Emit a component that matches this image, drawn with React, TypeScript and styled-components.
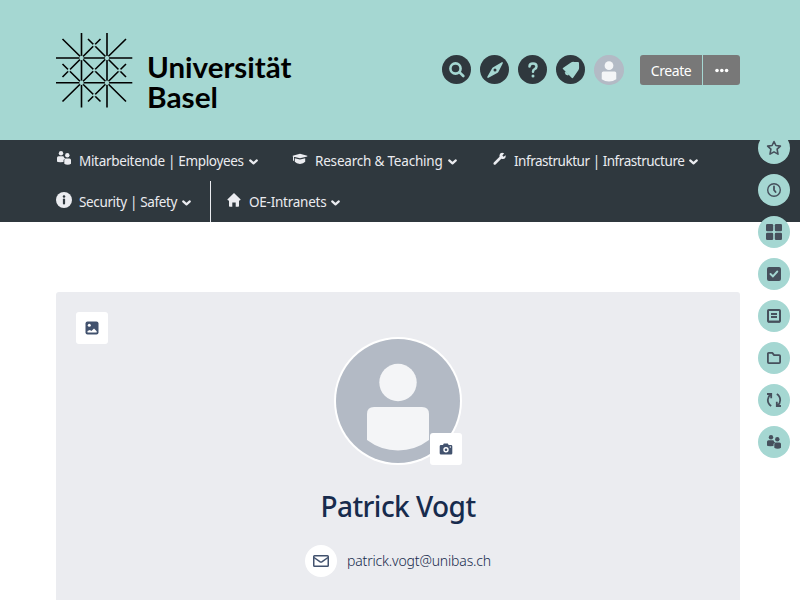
import React from 'react';
import styled, { createGlobalStyle } from 'styled-components';

const teal = '#a5d7d2';
const dark = '#2f383e';
const slate = '#46505c';

const GlobalStyle = createGlobalStyle`
  * { box-sizing: border-box; }
  html, body { margin: 0; background: #fff; overflow: hidden; }
  body { font-family: "Noto Sans", "Open Sans", sans-serif; font-size: 14px; color: #172b4d; }
  svg { display: block; flex: none; overflow: visible; }
`;

const Page = styled.div`
  position: relative;
  width: 800px;
  height: 600px;
  overflow: hidden;
`;
const Header = styled.header`
  height: 140px;
  padding: 0 60px 0 56px;
  background: ${teal};
  display: flex;
  justify-content: space-between;
`;
const Brand = styled.div`
  display: flex;
  margin-top: 30px;
`;
const Wordmark = styled.svg`
  margin: 18px 0 0 10px;
`;
const Actions = styled.div`
  display: flex;
  height: 30px;
  margin-top: 55px;
  align-items: flex-start;
`;
const Round = styled.button`
  width: 29px;
  height: 29px;
  margin: 0 9px 0 0;
  padding: 0;
  border: 0;
  border-radius: 50%;
  background: ${dark};
  color: ${teal};
  display: grid;
  place-items: center;
`;
const SmallAvatar = styled.div`
  width: 30px;
  height: 30px;
  margin-right: 16px;
`;
const CreateButton = styled.button<{ $w: number; $side: 'left' | 'right' }>`
  width: ${p => p.$w}px;
  height: 30px;
  padding: 0;
  border: 0;
  margin-left: ${p => (p.$side === 'right' ? 1 : 0)}px;
  border-radius: ${p => (p.$side === 'left' ? '3px 0 0 3px' : '0 3px 3px 0')};
  background: #787878;
  color: #fff;
  font: 14px "Noto Sans", sans-serif;
  letter-spacing: -0.42px;
  display: grid;
  place-items: center;
`;
const Nav = styled.nav`
  height: 82px;
  padding-left: 56px;
  background: ${dark};
  color: #ebecf0;
`;
const NavRow = styled.div`
  display: flex;
  height: 41px;
`;
const NavItem = styled.a<{ $w: number; $divider?: boolean; $gap?: number }>`
  width: ${p => p.$w}px;
  height: 41px;
  padding-left: ${p => p.$gap ?? 0}px;
  display: flex;
  align-items: center;
  border-right: ${p => (p.$divider ? '1px solid #ebecf0' : '0')};
`;
const NavIcon = styled.span<{ $w: number; $drop?: number }>`
  width: ${p => p.$w}px;
  height: 21px;
  padding-top: ${p => p.$drop ?? 0}px;
  flex: none;
`;
const NavLabel = styled.span<{ $track: number }>`
  margin-right: 5px;
  line-height: 20px;
  white-space: nowrap;
  font-size: 13.5px;
  letter-spacing: ${p => p.$track}px;
`;
const ChevronBox = styled.span`
  padding-top: 2px;
`;
const Profile = styled.main`
  position: relative;
  width: 684px;
  height: 340px;
  margin: 70px 0 0 56px;
  padding-top: 45px;
  border-radius: 3px;
  background: #ebecf0;
  display: flex;
  flex-direction: column;
  align-items: center;
`;
const Square = styled.button<{ $x: number; $y: number }>`
  position: absolute;
  left: ${p => p.$x}px;
  top: ${p => p.$y}px;
  width: 32px;
  height: 32px;
  padding: 0;
  border: 0;
  border-radius: 3px;
  background: #fff;
  display: grid;
  place-items: center;
`;
const Portrait = styled.div`
  position: relative;
  width: 128px;
  height: 128px;
`;
const Name = styled.h1`
  margin: 21px 0 0;
  height: 40px;
  font-size: 28px;
  line-height: 40px;
  font-weight: 500;
  letter-spacing: -0.55px;
  white-space: nowrap;
`;
const Contact = styled.div`
  display: flex;
  align-items: center;
  height: 32px;
  margin-top: 19px;
`;
const MailDisc = styled.span`
  width: 32px;
  height: 32px;
  border-radius: 50%;
  background: #fff;
  display: grid;
  place-items: center;
  margin-right: 10px;
`;
const Email = styled.span`
  font-size: 14px;
  line-height: 20px;
  letter-spacing: -0.17px;
  font-weight: 300;
`;
const Rail = styled.aside`
  position: absolute;
  left: 758px;
  top: 140px;
  height: 320px;
  overflow: hidden;
`;
const RailList = styled.div`
  display: flex;
  flex-direction: column;
  gap: 10px;
  margin-top: -8px;
`;
const RailButton = styled.button`
  width: 32px;
  height: 32px;
  padding: 0;
  border: 0;
  border-radius: 50%;
  background: ${teal};
  color: ${slate};
  display: grid;
  place-items: center;
`;

const Avatar = ({ size, ring }: { size: number; ring?: boolean }) => (
  <svg width={size} height={size} viewBox="0 0 128 128">
    <circle cx="64" cy="64" r="64" fill={ring ? '#fff' : '#b3bac5'} />
    <circle cx="64" cy="64" r="62" fill="#b3bac5" />
    <circle cx="64" cy="45.500" r="18.700" fill="#f4f5f7" />
    <path d="M33 77q0-7 7-7h48q7 0 7 7v26q-14 10.500-31 10.500T33 103z" fill="#f4f5f7" />
  </svg>
);

const People = ({ size }: { size: number }) => (
  <svg width={size} height={size} viewBox="0 0 16 16" fill="currentColor">
    <circle cx="5" cy="3.200" r="2.200" />
    <circle cx="11.300" cy="5.300" r="2.200" />
    <path d="M2.500 6.200h4.900q.6 1.700 1.900 2.200-1.800.6-1.800 2.200v1.500Q1 12.500 1 11.500V7.700q0-1.500 1.500-1.500zM9.800 8.600h3.700q1.500 0 1.500 1.500v3.700q-1.300 1-3.300 1t-3.400-1v-3.700q0-1.500 1.500-1.500z" />
  </svg>
);

const Chevron = () => (
  <ChevronBox>
    <svg width="9" height="6" viewBox="0 0 9 6" fill="none" stroke="currentColor" strokeWidth="2.200" strokeLinecap="round" strokeLinejoin="round">
      <path d="M1.200 1.400L4.500 4.400L7.800 1.400" />
    </svg>
  </ChevronBox>
);

const Graduation = () => (
  <svg width="16" height="12" viewBox="0 0 16 12" fill="currentColor">
    <path d="M8 .8l7.300 1.900v.9L8 5.300.7 3.600v-.9zM2.800 5.200L8 6.500l5.200-1.300v3.600Q11.500 10.900 8 10.900T2.800 8.800zM1 3.500h1v4.200H1z" />
  </svg>
);
const Wrench = () => (
  <svg width="14" height="14" viewBox="0 0 14 14" fill="currentColor">
    <path d="M12.700 3.300L10.500 4.800 9.400 3.500 11.200 1.200Q7.500-.4 6.500 3v1.700L.8 10.600q-.8 1 0 1.800t1.800 0l5.700-5.600Q13 8 12.700 3.300z" />
  </svg>
);
const Info = () => (
  <svg width="16" height="16" viewBox="0 0 16 16">
    <circle cx="8" cy="8" r="8" fill="currentColor" />
    <circle cx="8" cy="4.500" r="1.250" fill={dark} />
    <path d="M8 7.500v4" stroke={dark} strokeWidth="2.200" strokeLinecap="round" />
  </svg>
);
const Home = () => (
  <svg width="14" height="14" viewBox="0 0 14 14" fill="currentColor">
    <path d="M7 0l6.700 6.500-.8.900H12V13q0 .8-.8.800H8.700V9.500H5.300v4.300H2.800Q2 13.800 2 13V7.400h-.9l-.8-.9z" />
  </svg>
);

const UniversityLogo = () => (
  <Brand>
    <svg width="80" height="82" viewBox="56 30 80 82">
      <g stroke="#000" strokeWidth="1.600" fill="none">
        <path d="M81.500 33V107.500M107 33V107.500M56 58H132.300M56 82.700H132.300" />
        <path d="M62.500 39L126 101.500M126 39L62.500 101.500M81.500 58L100.500 39M107 58L88 39M81.500 58L62.500 77M81.500 82.700L62.500 64M107 58L126 77M107 82.700L126 64M81.500 82.700L100.500 101.500M107 82.700L88 101.500" />
      </g>
      <g fill={teal}>
        <circle cx="81.500" cy="58" r="2.200" />
        <circle cx="107" cy="58" r="2.200" />
        <circle cx="81.500" cy="82.700" r="2.200" />
        <circle cx="107" cy="82.700" r="2.200" />
        <circle cx="94.250" cy="70.300" r="1.500" />
        <circle cx="94.250" cy="45.300" r="1.500" />
        <circle cx="94.250" cy="95.300" r="1.500" />
        <circle cx="69" cy="70.300" r="1.500" />
        <circle cx="119.500" cy="70.300" r="1.500" />
      </g>
    </svg>
    <Wordmark width="150" height="64" viewBox="146 48 150 64" fontFamily="Lato, sans-serif" fontSize="29" fontWeight="700" fill="#000">
      <text x="147" y="78" textLength="144.500" lengthAdjust="spacingAndGlyphs">Universität</text>
      <text x="147" y="107.500" textLength="71" lengthAdjust="spacingAndGlyphs">Basel</text>
    </Wordmark>
  </Brand>
);

export default function App() {
  return (
    <>
      <GlobalStyle />
      <Page>
        <Header>
          <UniversityLogo />
          <Actions>
            <Round aria-label="Search">
              <svg width="16" height="16" viewBox="0 0 16 16" fill="none" stroke="currentColor">
                <circle cx="6.500" cy="6.500" r="5.100" strokeWidth="2.600" />
                <path d="M10.600 10.400l3.700 3.600" strokeWidth="2.700" strokeLinecap="round" />
              </svg>
            </Round>
            <Round aria-label="Discover">
              <svg width="16" height="16" viewBox="0 0 16 16" fill="currentColor">
                <path fillRule="evenodd" d="M15.200 0q1 0 .5 1.500l-4.200 8.200q-.4.900-1.300 1.400L1.500 15.800Q0 16.300.3 14.800L5 6.500q.4-.8 1.200-1.300zM8 6.500a1.500 1.500 0 100 3 1.500 1.500 0 000-3z" />
              </svg>
            </Round>
            <Round aria-label="Help">
              <svg width="12" height="16" viewBox="0 0 12 16" fill="none" stroke="currentColor" strokeWidth="2.500" strokeLinecap="round" strokeLinejoin="round">
                <path d="M2.500 4.500Q2.500 1.600 6 1.600T9.500 4.500Q9.500 6.300 7.600 7.100Q6 7.800 6 9.700" />
                <circle cx="6" cy="13.900" r="1.500" fill="currentColor" stroke="none" />
              </svg>
            </Round>
            <Round aria-label="Notifications">
              <svg width="18" height="18" viewBox="0 0 18 18" fill="currentColor">
                <path d="M1.500 8.500q-1.700-.8-.2-1.800L9 1.500q1.200-.8 3-.6l4 .2q1 .1 1 1.100l.1 4q.1 1.500-.6 2.700l-5.200 7.600q-1 1.400-1.900.1z" />
                <path d="M3.200 11.300q-.6 2.800 2.900 3.100l.8-.8-3-3z" />
              </svg>
            </Round>
            <SmallAvatar><Avatar size={30} /></SmallAvatar>
            <CreateButton $w={62} $side="left">Create</CreateButton>
            <CreateButton $w={37} $side="right" aria-label="More">
              <svg width="14" height="4" viewBox="0 0 14 4" fill="currentColor">
                <circle cx="2" cy="2.500" r="1.800" /><circle cx="6.800" cy="2.500" r="1.800" /><circle cx="11.600" cy="2.500" r="1.800" />
              </svg>
            </CreateButton>
          </Actions>
        </Header>
        <Nav>
          <NavRow>
            <NavItem $w={236}><NavIcon $w={23}><People size={16} /></NavIcon><NavLabel $track={-0.32}>Mitarbeitende | Employees</NavLabel><Chevron /></NavItem>
            <NavItem $w={201}><NavIcon $w={23} $drop={3}><Graduation /></NavIcon><NavLabel $track={-0.2}>Research &amp; Teaching</NavLabel><Chevron /></NavItem>
            <NavItem $w={220}><NavIcon $w={21} $drop={2}><Wrench /></NavIcon><NavLabel $track={-0.47}>Infrastruktur | Infrastructure</NavLabel><Chevron /></NavItem>
          </NavRow>
          <NavRow>
            <NavItem $w={155} $divider><NavIcon $w={23} $drop={1}><Info /></NavIcon><NavLabel $track={-0.36}>Security | Safety</NavLabel><Chevron /></NavItem>
            <NavItem $w={140} $gap={16}><NavIcon $w={22} $drop={2}><Home /></NavIcon><NavLabel $track={-0.25}>OE-Intranets</NavLabel><Chevron /></NavItem>
          </NavRow>
        </Nav>
        <Profile>
          <Square $x={20} $y={20} aria-label="Change header image">
            <svg width="14" height="14" viewBox="0 0 14 14">
              <rect x=".5" y=".5" width="13" height="13" rx="2" fill="#42526e" />
              <circle cx="4.300" cy="4.300" r="1.500" fill="#fff" />
              <path d="M2.500 11.500V10l2.400-1 1.500 1L9 7.500l2.700 2.800v1.200z" fill="#fff" />
            </svg>
          </Square>
          <Portrait>
            <Avatar size={128} ring />
            <Square $x={96} $y={96} aria-label="Change photo">
              <svg width="14" height="14" viewBox="0 0 14 14">
                <path d="M2 3h2l.8-1.500h4L9.700 3H12q1.300 0 1.300 1.300v7q0 1.200-1.300 1.200H2Q.7 12.500.7 11.300v-7Q.7 3 2 3z" fill="#42526e" />
                <circle cx="7" cy="7.800" r="2" fill="none" stroke="#fff" strokeWidth="1.400" />
                <circle cx="11.300" cy="5" r=".7" fill="#fff" />
              </svg>
            </Square>
          </Portrait>
          <Name>Patrick Vogt</Name>
          <Contact>
            <MailDisc>
              <svg width="16" height="12" viewBox="0 0 16 12" fill="none" stroke="#42526e" strokeWidth="1.500">
                <rect x=".75" y=".75" width="14.500" height="10.500" rx=".8" />
                <path d="M1 2.500l5.800 4.200q1.200.8 2.400 0L15 2.500" />
              </svg>
            </MailDisc>
            <Email>patrick.vogt@unibas.ch</Email>
          </Contact>
        </Profile>
        <Rail>
          <RailList>
            <RailButton aria-label="Favourites">
              <svg width="16" height="16" viewBox="0 0 16 16" fill="none" stroke="currentColor" strokeWidth="1.600" strokeLinejoin="round">
                <path d="M8 1.500l1.900 4 4.500.6-3.300 3.100.9 4.900L8 11.900l-4 2.200.9-4.900L1.600 6.100l4.500-.6z" />
              </svg>
            </RailButton>
            <RailButton aria-label="Recent">
              <svg width="16" height="16" viewBox="0 0 16 16" fill="none" stroke="currentColor" strokeLinecap="round">
                <circle cx="8" cy="8" r="6.300" strokeWidth="1.400" />
                <path d="M8 4.500V8l1.600 2" strokeWidth="1.800" />
              </svg>
            </RailButton>
            <RailButton aria-label="Apps">
              <svg width="16" height="16" viewBox="0 0 16 16" fill="currentColor">
                <rect width="7.200" height="7.200" rx="1.300" /><rect x="8.800" width="7.200" height="7.200" rx="1.300" />
                <rect y="8.800" width="7.200" height="7.200" rx="1.300" /><rect x="8.800" y="8.800" width="7.200" height="7.200" rx="1.300" />
              </svg>
            </RailButton>
            <RailButton aria-label="Tasks">
              <svg width="14" height="14" viewBox="0 0 14 14">
                <rect width="14" height="14" rx="2" fill="currentColor" />
                <path d="M3.500 7l2.400 2.300 4.400-4.800" fill="none" stroke={teal} strokeWidth="1.900" strokeLinecap="round" />
              </svg>
            </RailButton>
            <RailButton aria-label="Pages">
              <svg width="14" height="14" viewBox="0 0 14 14" fill="none" stroke="currentColor">
                <rect x="1" y="1" width="12" height="11.700" rx=".8" strokeWidth="2" />
                <path d="M4 5h6M4 8h6M1 12.700h12" strokeWidth="1.800" />
              </svg>
            </RailButton>
            <RailButton aria-label="Spaces">
              <svg width="14" height="12" viewBox="0 0 14 12" fill="none" stroke="currentColor" strokeWidth="1.800" strokeLinejoin="round">
                <path d="M.9 10.100V1.700q0-.8.8-.8h3.600l1.800 2.200h5q1 0 1 1v6q0 1-1 1H1.900q-1 0-1-1z" />
              </svg>
            </RailButton>
            <RailButton aria-label="Refresh">
              <svg width="16" height="16" viewBox="0 0 16 16" fill="none" stroke="currentColor" strokeWidth="1.800">
                <path d="M5.200 14Q1.800 12 1.800 7.800 1.800 4.700 4.500 2.500M1 2h4.200v4.200M10.800 2Q14.200 4 14.200 8.200q0 3.100-2.700 5.300M15 14h-4.200V9.800" />
              </svg>
            </RailButton>
            <RailButton aria-label="People"><People size={16} /></RailButton>
          </RailList>
        </Rail>
      </Page>
    </>
  );
}
